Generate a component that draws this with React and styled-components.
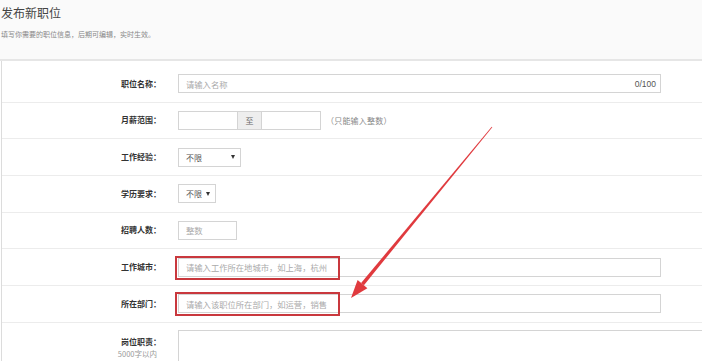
import React from "react";
import styled, { createGlobalStyle } from "styled-components";

const Global = createGlobalStyle`
  html, body { margin: 0; padding: 0; background: #fff; }
  body {
    width: 702px; height: 361px; overflow: hidden;
    font-family: "Noto Sans CJK SC", "Liberation Sans", sans-serif;
    color: #333;
  }
  * { box-sizing: border-box; }
`;

const Page = styled.div`
  position: relative;
  width: 702px;
  height: 361px;
  overflow: hidden;
`;

const Header = styled.header`
  height: 61px;
  background: #fafafa;
  border-bottom: 2px solid #e6e6e6;
  padding: 4px 0 0 1px;
`;

const Title = styled.h1`
  margin: 0;
  font-size: 12px;
  line-height: 18px;
  font-weight: 400;
  color: #444;
`;

const Subtitle = styled.p`
  margin: 7px 0 0;
  font-size: 7px;
  line-height: 10px;
  color: #888;
`;

const Form = styled.div`
  margin-left: 1px;
  border-left: 1px solid #dcdcdc;
  padding-top: 5px;
  height: 300px;
`;

const Row = styled.div`
  display: grid;
  grid-template-columns: 159px 1fr;
  column-gap: 17px;
  align-items: ${(p) => (p.$top ? "start" : "center")};
  height: ${(p) => (p.$top ? "auto" : "36.67px")};
  border-bottom: ${(p) => (p.$top ? "none" : "1px solid #ececec")};
  padding-top: ${(p) => (p.$top ? "7px" : "0")};
`;

const Label = styled.div`
  text-align: right;
  font-size: 8px;
  font-weight: 700;
  color: #333;
  line-height: 12px;
  padding-top: ${(p) => (p.$pt || 0)}px;
`;

const Note = styled.div`
  font-size: 7.5px;
  font-weight: 400;
  color: #999;
  line-height: 11px;
  margin-right: 4px;
`;

const Field = styled.div`
  display: flex;
  align-items: center;
  gap: 5px;
`;

const Box = styled.div`
  position: relative;
  display: flex;
  align-items: center;
  width: ${(p) => p.$w}px;
  height: 19px;
  border: 1px solid #d4d4d4;
  background: #fff;
`;

const TextInput = styled.input`
  flex: 1;
  min-width: 0;
  height: 100%;
  border: none;
  outline: none;
  padding: 0 7px;
  font-family: inherit;
  font-size: 8.3px;
  color: #333;
  background: transparent;
  &::placeholder { color: #aaa; }
`;

const Counter = styled.span`
  font-size: 8.5px;
  color: #555;
  padding-right: 4px;
  font-family: "Liberation Sans", sans-serif;
`;

const Addon = styled.span`
  width: 25px;
  height: 100%;
  display: flex;
  align-items: center;
  justify-content: center;
  background: #eee;
  border-left: 1px solid #d4d4d4;
  border-right: 1px solid #d4d4d4;
  font-size: 8px;
  color: #666;
`;

const Hint = styled.span`
  font-size: 8px;
  color: #888;
  letter-spacing: 0.2px;
`;

const Select = styled.div`
  display: flex;
  align-items: center;
  justify-content: space-between;
  width: ${(p) => p.$w}px;
  height: 19px;
  border: 1px solid #d4d4d4;
  background: #fff;
  padding: 0 5px 0 7px;
  font-size: 8px;
  color: #555;
`;

const Caret = styled.span`
  width: 0;
  height: 0;
  border-left: 2.5px solid transparent;
  border-right: 2.5px solid transparent;
  border-top: 4px solid #333;
`;

const Mark = styled.span`
  position: absolute;
  left: -4px;
  top: -3px;
  bottom: -4px;
  width: 165px;
  border: 2px solid #c9383d;
  pointer-events: none;
`;

const TextArea = styled.textarea`
  width: 560px;
  height: 60px;
  border: 1px solid #d4d4d4;
  resize: none;
  outline: none;
  margin-top: 0;
  font-family: inherit;
`;

const Overlay = styled.svg`
  position: absolute;
  left: 0;
  top: 0;
  pointer-events: none;
`;

function Input({ w, placeholder, mark, counter }) {
  return (
    <Box $w={w}>
      <TextInput placeholder={placeholder} />
      {counter && <Counter>{counter}</Counter>}
      {mark && <Mark />}
    </Box>
  );
}

export default function App() {
  return (
    <Page>
      <Global />
      <Header>
        <Title>发布新职位</Title>
        <Subtitle>填写你需要的职位信息，后期可编辑，实时生效。</Subtitle>
      </Header>
      <Form>
        <Row>
          <Label>职位名称：</Label>
          <Field>
            <Input w={483} placeholder="请输入名称" counter="0/100" />
          </Field>
        </Row>
        <Row>
          <Label>月薪范围：</Label>
          <Field>
            <Box $w={143}>
              <TextInput />
              <Addon>至</Addon>
              <TextInput />
            </Box>
            <Hint>（只能输入整数）</Hint>
          </Field>
        </Row>
        <Row>
          <Label>工作经验：</Label>
          <Field>
            <Select $w={63}>
              不限
              <Caret />
            </Select>
          </Field>
        </Row>
        <Row>
          <Label>学历要求：</Label>
          <Field>
            <Select $w={38}>
              不限
              <Caret />
            </Select>
          </Field>
        </Row>
        <Row>
          <Label>招聘人数：</Label>
          <Field>
            <Input w={59} placeholder="整数" />
          </Field>
        </Row>
        <Row>
          <Label>工作城市：</Label>
          <Field>
            <Input w={483} placeholder="请输入工作所在地城市，如上海，杭州" mark />
          </Field>
        </Row>
        <Row>
          <Label>所在部门：</Label>
          <Field>
            <Input w={483} placeholder="请输入该职位所在部门，如运营，销售" mark />
          </Field>
        </Row>
        <Row $top>
          <Label $pt={6}>
            岗位职责：
            <Note>5000字以内</Note>
          </Label>
          <TextArea />
        </Row>
      </Form>
      <Overlay width="702" height="361" viewBox="0 0 702 361">
        <polygon
          points="492.3,127.3 491.7,126.7 361.1,283.0 363.9,285.2"
          fill="#e03a3e"
        />
        <polygon points="351,298 357.6,280.0 367.4,288.2" fill="#e03a3e" />
      </Overlay>
    </Page>
  );
}
